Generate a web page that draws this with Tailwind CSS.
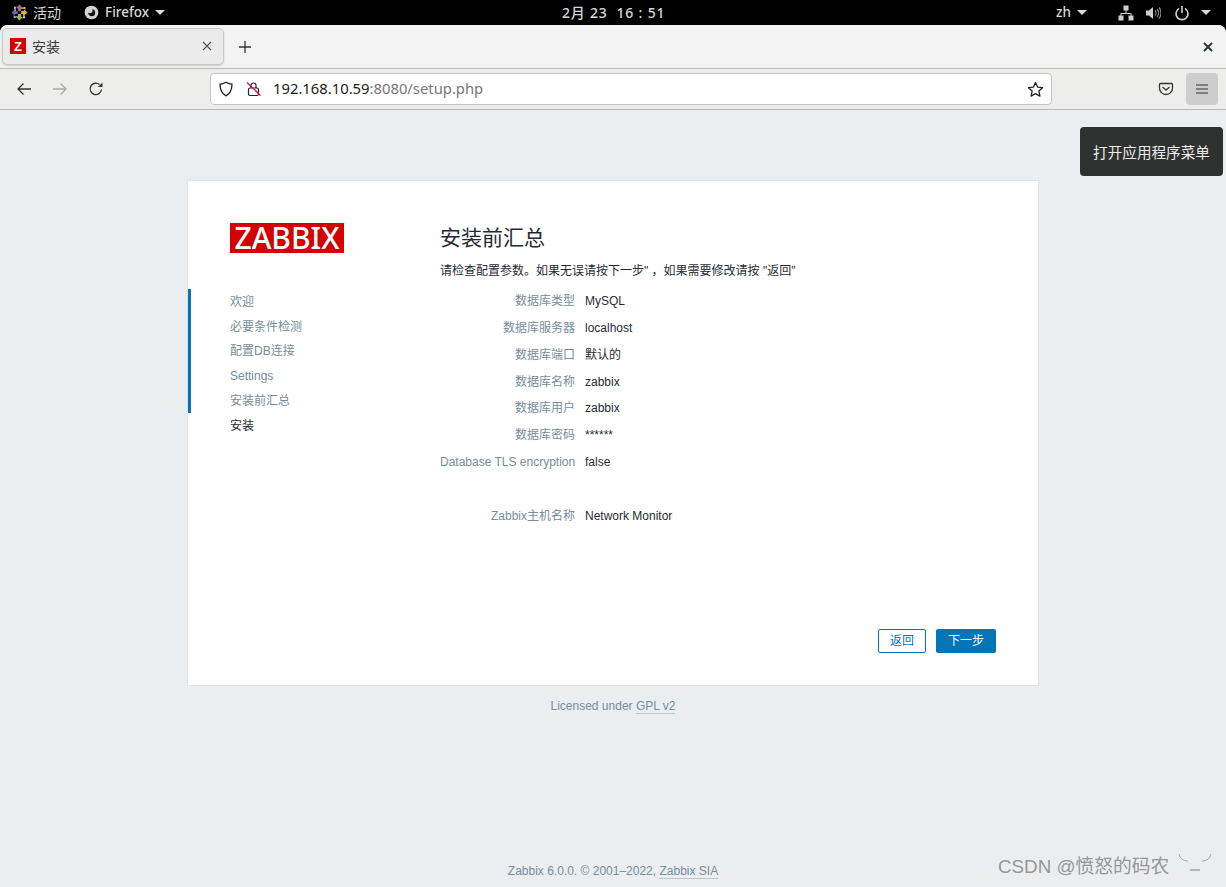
<!DOCTYPE html>
<html lang="zh">
<head>
<meta charset="UTF-8">
<title>安装</title>
<script src="https://cdn.jsdelivr.net/npm/@tailwindcss/browser@4"></script>
</head>
<body class="relative w-[1226px] h-[887px] overflow-hidden bg-black font-['Liberation_Sans','Noto_Sans_CJK_SC',sans-serif]">
  <!-- GNOME top bar -->
  <div class="h-[25px] flex items-center bg-black text-[#d8d8d8] text-[14px] font-['Noto_Sans','Noto_Sans_CJK_SC',sans-serif]">
    <div class="flex items-center w-[84px] pl-[11px] gap-[5px]">
      <svg width="17" height="17" viewBox="0 0 16 16"><path d="M8 .5l2.700 2.700-1.200 1.200v2.100H6.500V4.400L5.300 3.200z" fill="#a8639f"/><path d="M15.500 8l-2.700 2.700-1.200-1.200H9.500v-3h2.100l1.200-1.200z" fill="#e2a93c"/><path d="M8 15.500l-2.700-2.700 1.200-1.200V9.500h3v2.100l1.200 1.200z" fill="#9ab83f"/><path d="M.5 8l2.700-2.700 1.200 1.200h2.100v3H4.400l-1.200 1.200z" fill="#5f64a8"/><path d="M2.500 2.500h3.200L4.500 3.700v2.800H3.700z" fill="#d2b4d6"/><path d="M13.500 2.500v3.200l-1.200-1.200H9.500V3.700z" fill="#e8c9a0"/><path d="M13.500 13.500h-3.200l1.200-1.200V9.500h.8z" fill="#dfd27a"/><path d="M2.500 13.500v-3.200l1.200 1.200h2.800v.8z" fill="#a9a9d6"/></svg>
      <span>活动</span>
    </div>
    <div class="flex items-center w-[478px] gap-[6px] font-medium">
      <svg width="15" height="15" viewBox="0 0 16 16"><circle cx="8" cy="8" r="7.300" fill="#d4d4d4"/><path d="M8.500 4.500a3.700 3.700 0 1 1-4 3.500c1 1 2.500 1.500 4-.2 1-1.100.6-2.600 0-3.300z" fill="#111"/><path d="M1 5l2-3 3 1-2 3z" fill="#d4d4d4"/></svg>
      <span class="text-[13.500px]">Firefox</span>
      <span class="w-0 h-0 border-x-[5px] border-x-transparent border-t-[5px] border-t-[#d8d8d8]"></span>
    </div>
    <div class="w-[494px] text-[14px] font-medium tracking-[0.8px]">2月 23&nbsp; 16 : 51</div>
    <div class="flex items-center w-[62px] gap-[6px] font-medium text-[13.500px]">
      <span>zh</span>
      <span class="w-0 h-0 border-x-[5px] border-x-transparent border-t-[5px] border-t-[#d8d8d8]"></span>
    </div>
    <div class="flex items-center gap-[11px]">
      <svg width="16" height="16" viewBox="0 0 16 16" fill="#cfcfcf"><rect x="5.500" y="0.500" width="5" height="5"/><rect x="0.500" y="10.500" width="5" height="5"/><rect x="10.500" y="10.500" width="5" height="5"/><path d="M7.500 5h1v3h5v3h-1V9h-9v2h-1V8h5z"/></svg>
      <svg width="16" height="16" viewBox="0 0 16 16" fill="none"><path d="M1 5.500h3L8 2v12L4 10.500H1z" fill="#cfcfcf"/><path d="M10 5.500a3.500 3.500 0 0 1 0 5M12 4a6 6 0 0 1 0 8M14 2.500a8.500 8.500 0 0 1 0 11" stroke="#8a8a8a" stroke-width="1.200"/></svg>
      <svg class="ml-[2px]" width="16" height="16" viewBox="0 0 16 16" fill="none" stroke="#d4d4d4" stroke-width="1.600" stroke-linecap="round"><path d="M8 1.500v6"/><path d="M4.500 3.800a6 6 0 1 0 7 0"/></svg>
      <span class="w-0 h-0 border-x-[5px] border-x-transparent border-t-[5px] border-t-[#d8d8d8]"></span>
    </div>
  </div>

  <!-- browser window -->
  <div class="h-[862px] flex flex-col rounded-t-[8px] overflow-hidden bg-[#ebeef1]">
    <!-- tab strip -->
    <div class="h-[44px] shrink-0 flex items-center pl-[2px] bg-[#f3f3f3] border-b border-[#b9b9b7]">
      <div class="w-[222px] h-[37px] -mt-[1px] flex items-center pl-[7px] pr-[11px] rounded-[5px] bg-[#ebebeb] border border-[#c8c8c8] shadow-[0_1px_2px_rgba(0,0,0,0.15)]">
        <span class="w-[16px] h-[16px] flex items-center justify-center bg-[#d40000] text-white text-[13px] font-bold leading-none">Z</span>
        <span class="ml-[6px] text-[14px] text-[#3a3a3a] font-['Noto_Sans_CJK_SC',sans-serif]">安装</span>
        <svg class="ml-auto" width="10" height="10" viewBox="0 0 10 10" stroke="#555" stroke-width="1.100"><path d="M1 1l8 8M9 1l-8 8"/></svg>
      </div>
      <svg class="ml-[14px]" width="14" height="14" viewBox="0 0 14 14" stroke="#333" stroke-width="1.300"><path d="M7 1v12M1 7h12"/></svg>
      <svg class="ml-auto mr-[13px]" width="10" height="10" viewBox="0 0 10 10" stroke="#2e3436" stroke-width="2"><path d="M1 1l8 8M9 1l-8 8"/></svg>
    </div>
    <!-- nav bar -->
    <div class="h-[41px] shrink-0 flex items-center bg-[#ededeb] border-b border-[#b9b9b7]">
      <svg class="ml-[16px]" width="16" height="16" viewBox="0 0 16 16" fill="none" stroke="#333" stroke-width="1.300"><path d="M15 8H2M7.500 2.500L2 8l5.500 5.500"/></svg>
      <svg class="ml-[20px]" width="16" height="16" viewBox="0 0 16 16" fill="none" stroke="#a8a8a8" stroke-width="1.300"><path d="M1 8h13M8.500 2.500L14 8l-5.500 5.500"/></svg>
      <svg class="ml-[20px]" width="16" height="16" viewBox="0 0 16 16" fill="none" stroke="#333" stroke-width="1.300"><path d="M13.500 8.500A5.700 5.700 0 1 1 11.500 3.500"/><path d="M14.500 1.500v4.500H10z" fill="#333" stroke="none"/></svg>
      <div class="ml-[106px] w-[842px] h-[32px] flex items-center bg-white border border-[#c4c4c2] rounded-[4px]">
        <svg class="ml-[7px]" width="16" height="16" viewBox="0 0 16 16" fill="none" stroke="#222" stroke-width="1.300"><path d="M8 1.200c2 1.200 4 1.800 6 1.900 0 6-1.800 9.700-6 11.700-4.200-2-6-5.700-6-11.700 2-.1 4-.7 6-1.900z"/></svg>
        <svg class="ml-[12px]" width="16" height="16" viewBox="0 0 16 16" fill="none"><rect x="2.500" y="7" width="10" height="7.500" rx="1.500" stroke="#222" stroke-width="1.200"/><path d="M5 7V4.500a2.500 2.500 0 0 1 5 0V7" stroke="#222" stroke-width="1.200"/><path d="M1 1.500l13.500 13" stroke="#e0115f" stroke-width="1.300"/></svg>
        <span class="ml-[11px] -mt-[2px] text-[14.800px] text-[#1c1c1c] font-['Noto_Sans',sans-serif] whitespace-nowrap">192.168.10.59<span class="text-[#77777a]">:8080/setup.php</span></span>
        <svg class="ml-auto mr-[7px]" width="17" height="17" viewBox="0 0 17 17" fill="none" stroke="#222" stroke-width="1.300" stroke-linejoin="round"><path d="M8.500 1.500l2.100 4.600 5 .6-3.700 3.400 1 5-4.400-2.500-4.400 2.500 1-5L1.400 6.700l5-.6z"/></svg>
      </div>
      <svg class="ml-[106px]" width="16" height="16" viewBox="0 0 16 16" fill="none" stroke="#333" stroke-width="1.300" stroke-linecap="round" stroke-linejoin="round"><path d="M2.500 2.500h11a1 1 0 0 1 1 1V7a6.500 6.500 0 0 1-13 0V3.500a1 1 0 0 1 1-1z"/><path d="M5 6.500L8 9l3-2.500"/></svg>
      <div class="ml-[12px] w-[32px] h-[32px] flex items-center justify-center rounded-[4px] bg-[#cdcdcd]">
        <svg width="14" height="12" viewBox="0 0 14 12" stroke="#333" stroke-width="1.200"><path d="M1 2h12M1 6h12M1 10h12"/></svg>
      </div>
    </div>
    <!-- page -->
    <div class="flex-1 flex flex-col items-center pt-[70px] bg-[#ebeef1]">
      <div class="w-[852px] h-[506px] flex bg-white border border-[#dfe4e7]">
        <aside class="w-[252px] shrink-0 pt-[42px]">
          <div class="ml-[42px] w-[114px] h-[30px] flex items-center justify-center bg-[#d40000] text-white text-[30px] font-medium leading-none font-['Noto_Sans',sans-serif]">ZABBIX</div>
          <ul class="mt-[36px] text-[12px] text-[#768d99]">
            <li class="h-[24.800px] pt-[1px] flex items-center pl-[39px] border-l-[3px] border-[#0275b8]">欢迎</li>
            <li class="h-[24.800px] pt-[1px] flex items-center pl-[39px] border-l-[3px] border-[#0275b8]">必要条件检测</li>
            <li class="h-[24.800px] pt-[1px] flex items-center pl-[39px] border-l-[3px] border-[#0275b8]">配置DB连接</li>
            <li class="h-[24.800px] pt-[1px] flex items-center pl-[39px] border-l-[3px] border-[#0275b8]">Settings</li>
            <li class="h-[24.800px] pt-[1px] flex items-center pl-[39px] border-l-[3px] border-[#0275b8]">安装前汇总</li>
            <li class="h-[24.800px] pt-[1px] flex items-center pl-[42px] text-[#1f2c33]">安装</li>
          </ul>
        </aside>
        <main class="flex-1 flex flex-col pt-[42px] pr-[42px]">
          <h1 class="h-[30px] text-[21px] leading-[30px] text-[#1f2c33] font-normal">安装前汇总</h1>
          <p class="mt-[8px] h-[20px] text-[12px] leading-[20px] text-[#1f2c33]">请检查配置参数。如果无误请按下一步" ，如果需要修改请按 "返回"</p>
          <dl class="mt-[6.800px] text-[12px] text-[#1f2c33]">
            <div class="h-[26.800px] flex items-center"><dt class="w-[135px] text-right text-[#768d99]">数据库类型</dt><dd class="ml-[10px]">MySQL</dd></div>
            <div class="h-[26.800px] flex items-center"><dt class="w-[135px] text-right text-[#768d99]">数据库服务器</dt><dd class="ml-[10px]">localhost</dd></div>
            <div class="h-[26.800px] flex items-center"><dt class="w-[135px] text-right text-[#768d99]">数据库端口</dt><dd class="ml-[10px]">默认的</dd></div>
            <div class="h-[26.800px] flex items-center"><dt class="w-[135px] text-right text-[#768d99]">数据库名称</dt><dd class="ml-[10px]">zabbix</dd></div>
            <div class="h-[26.800px] flex items-center"><dt class="w-[135px] text-right text-[#768d99]">数据库用户</dt><dd class="ml-[10px]">zabbix</dd></div>
            <div class="h-[26.800px] flex items-center"><dt class="w-[135px] text-right text-[#768d99]">数据库密码</dt><dd class="ml-[10px]">******</dd></div>
            <div class="h-[26.800px] flex items-center"><dt class="w-[135px] text-right text-[#768d99] whitespace-nowrap">Database TLS encryption</dt><dd class="ml-[10px]">false</dd></div>
            <div class="h-[26.800px]"></div>
            <div class="h-[26.800px] flex items-center"><dt class="w-[135px] text-right text-[#768d99]">Zabbix主机名称</dt><dd class="ml-[10px]">Network Monitor</dd></div>
          </dl>
          <div class="mt-auto mb-[32px] flex justify-end gap-[10px]">
            <button class="w-[48px] h-[24px] text-[12px] text-[#0275b8] bg-white border border-[#0275b8] rounded-[2px]">返回</button>
            <button class="w-[60px] h-[24px] text-[12px] text-white bg-[#0275b8] rounded-[2px]">下一步</button>
          </div>
        </main>
      </div>
      <p class="mt-[12px] text-[12px] leading-[16px] text-[#768d99]">Licensed under <span class="border-b border-[#b8c6cd]">GPL v2</span></p>
      <p class="mt-auto mb-[8px] text-[12px] leading-[16px] text-[#768d99]">Zabbix 6.0.0. © 2001–2022, <span class="border-b border-[#b8c6cd]">Zabbix SIA</span></p>
    </div>
  </div>

  <!-- tooltip over the page -->
  <div class="absolute left-[1080px] top-[127px] w-[143px] h-[49px] flex items-center justify-center rounded-[4px] bg-[#2f3130] text-[#ececec] text-[14.600px] font-['Noto_Sans_CJK_SC',sans-serif]">打开应用程序菜单</div>
  <!-- CSDN watermark -->
  <div class="absolute left-[998px] top-[853px] flex items-center text-[18.800px] leading-[28px] text-[#979797]">
    <span>CSDN @愤怒的码农</span>
    <svg class="ml-[9px] -mt-[8px]" width="34" height="22" viewBox="0 0 34 22" fill="none" stroke="#a5a5a5"><path d="M1 2c1 5 5 7 9 7M33 2c-1 5-5 7-9 7"/><path d="M12 18h10" stroke-width="1.500"/></svg>
  </div>
</body>
</html>
